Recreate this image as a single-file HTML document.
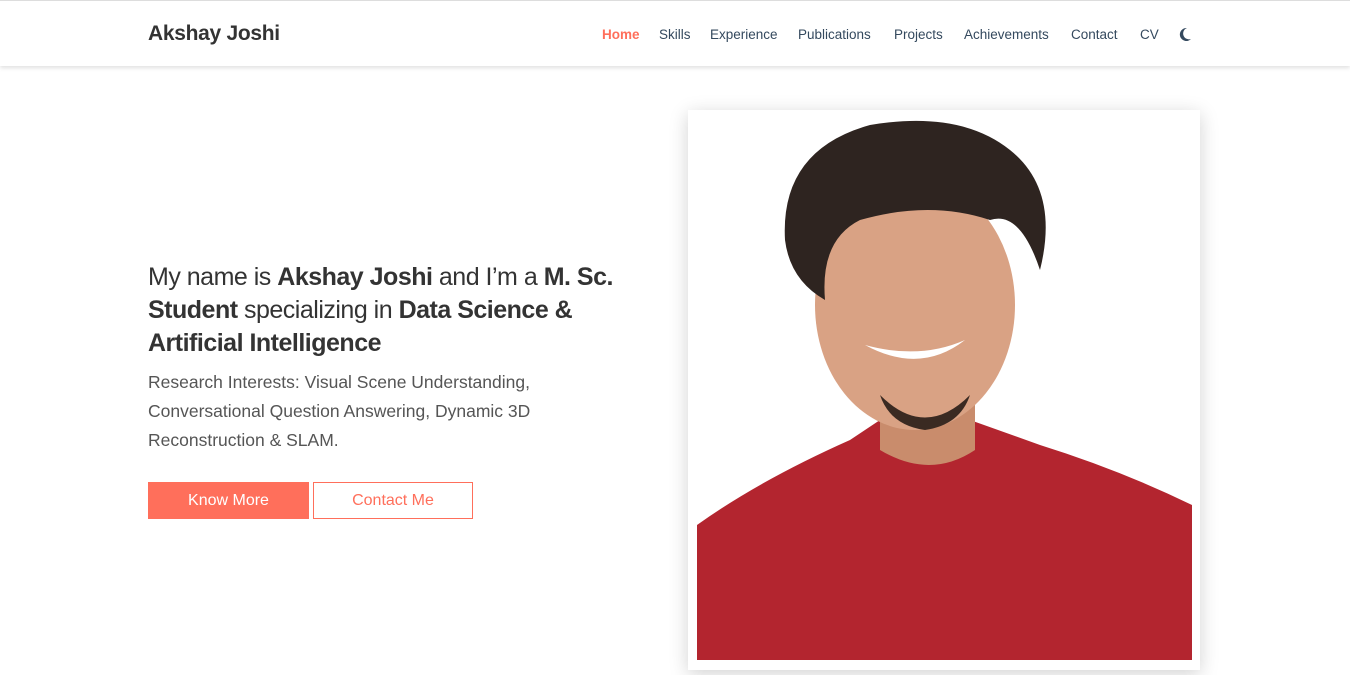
<!DOCTYPE html>
<html><head><meta charset="utf-8"><style>
*{margin:0;padding:0;box-sizing:border-box}
body{width:1350px;height:663px;overflow:hidden;background:#fff;font-family:"Liberation Sans",sans-serif;position:relative}
.nav{position:absolute;left:0;top:0;width:1350px;height:66px;border-top:1px solid #ddd;box-shadow:0 2px 4px rgba(0,0,0,.12);background:#fff}
.brand{position:absolute;left:148px;top:21px;font-size:21px;color:#333;font-weight:bold;letter-spacing:-0.3px}
.links{position:absolute;top:26px;left:602px;font-size:13.5px;color:#34495e}
.links span{position:absolute;white-space:nowrap}
.h1{position:absolute;left:148px;top:261px;width:500px;font-size:25px;line-height:33px;color:#333;letter-spacing:-0.5px}
.p{position:absolute;left:148px;top:368px;width:480px;font-size:17.5px;line-height:29px;color:#555}
.b1{position:absolute;left:148px;top:482px;width:161px;height:37px;background:#ff6f5b;color:#fff;font-size:16px;text-align:center;line-height:37px}
.b2{position:absolute;left:313px;top:482px;width:160px;height:37px;border:1px solid #ff6f5b;color:#ff6f5b;font-size:16px;text-align:center;line-height:35px}
.card{position:absolute;left:688px;top:110px;width:512px;height:560px;background:#fff;box-shadow:0 4px 18px rgba(0,0,0,.18)}
</style></head><body>
<div class="nav">
<div class="brand">Akshay Joshi</div>
<div class="links">
<span style="left:0;color:#ff6f5b;font-weight:bold">Home</span>
<span style="left:57px">Skills</span>
<span style="left:108px">Experience</span>
<span style="left:196px">Publications</span>
<span style="left:292px">Projects</span>
<span style="left:362px">Achievements</span>
<span style="left:469px">Contact</span>
<span style="left:538px">CV</span>
</div>
<svg style="position:absolute;left:1178px;top:26px" width="14" height="15" viewBox="0 0 14 15"><path d="M9 1A6.5 6.5 0 1 0 13 12 5.5 5.5 0 0 1 9 1Z" fill="#34495e"/></svg>
</div>
<div class="h1">My name is <b>Akshay Joshi</b> and I’m a <b>M. Sc. Student</b> specializing in <b>Data Science &amp; Artificial Intelligence</b></div>
<div class="p">Research Interests: Visual Scene Understanding, Conversational Question Answering, Dynamic 3D Reconstruction &amp; SLAM.</div>
<div class="b1">Know More</div>
<div class="b2">Contact Me</div>
<div class="card">
<svg width="512" height="560" viewBox="688 110 512 560">
<path d="M697 525 Q760 480 850 440 L880 420 L970 420 L1040 445 Q1120 470 1192 505 L1192 660 L697 660 Z" fill="#b3252f"/>
<path d="M880 380 L880 450 Q930 480 975 450 L975 380 Z" fill="#c98c6c"/>
<ellipse cx="915" cy="305" rx="100" ry="125" fill="#d9a284"/>
<path d="M785 240 Q780 150 870 125 Q960 110 1010 150 Q1060 190 1040 270 Q1020 210 990 220 Q930 200 860 220 Q820 240 825 300 Q790 280 785 240Z" fill="#2e2420"/>
<path d="M865 345 Q920 375 965 340 Q920 360 865 345Z" fill="#fff"/>
<path d="M880 395 Q925 440 970 395 Q960 425 925 430 Q890 425 880 395Z" fill="#3a2a22"/>
</svg>
</div>
</body></html>
